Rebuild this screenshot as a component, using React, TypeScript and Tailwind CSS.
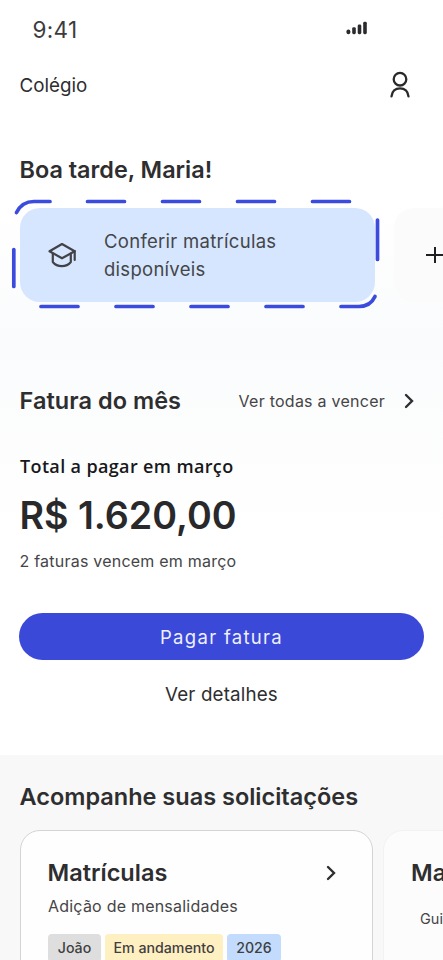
import React from 'react';

const tags = [
    { label: 'João', style: 'w-[53px] bg-[#dedede]' },
    { label: 'Em andamento', style: 'w-[118px] bg-[#fff0c2]' },
    { label: '2026', style: 'w-[54px] bg-[#c3dcfd]' },
];

export default function App() {
    return (
        <div className="flex h-[960px] w-[443px] flex-col overflow-hidden bg-white font-['Inter',sans-serif] text-[#2e2e30]">
            <StatusBar />
            <header className="flex h-[50px] items-center justify-between pl-[19.5px] pr-[32px]">
                <span className="mt-[2px] text-[18.8px]">Colégio</span>
                <UserIcon />
            </header>
            <Greeting />
            <Invoice />
            <Requests />
        </div>
    );
}

function StatusBar() {
    return (
        <div className="flex h-[60px] items-center justify-between pl-[32.5px] pr-[75px]">
            <span className="text-[22.5px] leading-none tracking-[0.3px] text-[#3c3c3e]">9:41</span>
            <svg className="-mt-[5px] h-[14px] w-[22px]" viewBox="0 0 22 14" fill="#2b2b2d">
                <rect x="0.5" y="8.5" width="3.8" height="4.7" rx="1.8" />
                <rect x="6.2" y="6.2" width="3.6" height="7" rx="1.4" />
                <rect x="11.7" y="3.5" width="3.6" height="9.7" rx="1.4" />
                <rect x="17.2" y="0.8" width="3.6" height="12.4" rx="1.4" />
            </svg>
        </div>
    );
}

function Greeting() {
    return (
        <section className="flex h-[228px] shrink-0 flex-col bg-linear-to-b from-white from-40% to-[#fafbfc] pt-[44px]">
            <h1 className="pl-[19.5px] text-[23.4px] leading-8 font-semibold">Boa tarde, Maria!</h1>
            <div className="mt-[22px] flex h-[94px] shrink-0 gap-[19px]">
                <div className="relative ml-5 flex w-[355px] shrink-0 items-center rounded-[20px] bg-[#d6e6fe] pl-7">
                    <GraduationIcon />
                    <p className="ml-7 text-[18.5px] leading-7 tracking-[0.28px] text-[#444548]">
                        Conferir matrículas
                        <br />
                        disponíveis
                    </p>
                    <DashedFrame />
                </div>
                <div className="flex w-[90px] shrink-0 items-center rounded-[20px] bg-[#fbfbfb] pl-[32px]">
                    <svg className="h-[18px] w-[18px]" viewBox="0 0 18 18" stroke="#202022" strokeWidth="2">
                        <path d="M9 1v16M0 9h18" />
                    </svg>
                </div>
            </div>
        </section>
    );
}

function Invoice() {
    return (
        <section className="flex h-[417px] shrink-0 flex-col bg-linear-to-b from-[#fafbfc] via-white via-50% to-white px-5 pt-[47px]">
            <div className="flex h-8 items-center">
                <h2 className="-ml-[0.5px] text-[23.5px] font-semibold tracking-[0.05px]">Fatura do mês</h2>
                <a className="ml-auto text-[16px] tracking-[0.25px] text-[#454547]">Ver todas a vencer</a>
                <Chevron className="mr-[9px] ml-[19px]" />
            </div>
            <p className="mt-[37px] font-['Open_Sans',sans-serif] text-[18px] leading-6 font-semibold tracking-[0.36px] text-[#18181a]">
                Total a pagar em março
            </p>
            <p className="mt-[13px] -ml-[0.5px] text-[37.6px] leading-[50px] font-semibold text-[#29292b]">R$ 1.620,00</p>
            <p className="mt-[8px] -ml-[0.5px] text-[16px] leading-6 tracking-[0.22px] text-[#454547]">
                2 faturas vencem em março
            </p>
            <button className="-mr-px -ml-px mt-[40px] h-[47px] shrink-0 rounded-full bg-[#3b49d8] pt-[2px] text-[18.5px] tracking-[1.3px] text-[#eef0ff]">
                Pagar fatura
            </button>
            <button className="mt-[21px] h-7 text-[18.8px] tracking-[0.15px]">Ver detalhes</button>
        </section>
    );
}

function Requests() {
    return (
        <section className="flex h-[205px] shrink-0 flex-col bg-[#f8f8f8] pt-[26px]">
            <h2 className="pl-[19.5px] text-[23.5px] leading-8 font-semibold">Acompanhe suas solicitações</h2>
            <div className="mt-[17px] ml-5 flex gap-[10px]">
                <article className="h-[180px] w-[353px] shrink-0 rounded-[20px] border border-[#d4d4d6] bg-[#fefefe] px-[27px] pt-[26px]">
                    <div className="flex h-8 items-center justify-between">
                        <h3 className="-ml-[0.5px] text-[23.5px] font-semibold">Matrículas</h3>
                        <Chevron className="mr-[9.5px]" />
                    </div>
                    <p className="mt-[5px] text-[16px] leading-6 tracking-[0.22px] text-[#454547]">
                        Adição de mensalidades
                    </p>
                    <div className="mt-4 flex gap-[4px]">
                        {tags.map((tag) => (
                            <span
                                key={tag.label}
                                className={`${tag.style} flex h-7 items-center justify-center rounded-[4px] text-[14.2px] font-medium whitespace-nowrap text-[#3f3f41]`}
                            >
                                {tag.label}
                            </span>
                        ))}
                    </div>
                </article>
                <article className="h-[180px] w-[353px] shrink-0 rounded-[20px] border border-[#f2f2f2] bg-[#fcfcfc] px-[27px] pt-[26px]">
                    <h3 className="text-[23.5px] leading-8 font-semibold">Matrículas</h3>
                    <span className="mt-[18px] block pl-[9px] text-[14.5px] leading-6 text-[#454547]">Guia</span>
                </article>
            </div>
        </section>
    );
}

function Chevron({ className }: { className: string }) {
    return (
        <svg
            className={`${className} h-4 w-[10px] shrink-0`}
            viewBox="0 0 10 16"
            fill="none"
            stroke="#2f2f31"
            strokeWidth="2.4"
            strokeLinecap="round"
        >
            <path d="m2 2 6 6-6 6" />
        </svg>
    );
}

function UserIcon() {
    return (
        <svg
            className="h-7 w-[22px]"
            viewBox="0 0 22 28"
            fill="none"
            stroke="#29292b"
            strokeWidth="2.3"
            strokeLinecap="round"
        >
            <circle cx="11" cy="8.2" r="6.3" />
            <path d="M2.5 25.300C3 20.400 6.300 17.300 11 17.300s8 3.100 8.500 8" />
        </svg>
    );
}

function GraduationIcon() {
    return (
        <svg
            className="h-[26px] w-7 shrink-0"
            viewBox="0 0 28 26"
            fill="none"
            stroke="#414247"
            strokeWidth="2.2"
            strokeLinecap="round"
            strokeLinejoin="round"
        >
            <path d="M1.5 9.200 14 2l12.700 7.200L14 16.300z" />
            <path d="M4.800 11.500v8.500c2.200 2.800 5.500 4.200 9 4.200s6.800-1.400 9-4.200v-8.500" />
            <path d="M26.700 9.200v8.800" />
        </svg>
    );
}

function DashedFrame() {
    return (
        <svg
            className="absolute -top-[10px] -left-[10px] h-[116px] w-[375px]"
            viewBox="10 198 375 116"
            fill="none"
            stroke="#3b4bdd"
            strokeWidth="3.7"
            strokeLinecap="round"
        >
            <path d="M16.500 212.500C20 205.500 26 201.500 34 201.500H50" />
            <path d="M87.500 201.500h37M162.500 201.500h37M237.500 201.500h37M312.500 201.500h37" />
            <path d="M377.500 220v39.500" />
            <path d="M41 306.500h37M116 306.500h37M191 306.500h37M266 306.500h37" />
            <path d="M341 306.500h18c7 0 13-3.500 16-10" />
            <path d="M13.800 249.500v37" />
        </svg>
    );
}
